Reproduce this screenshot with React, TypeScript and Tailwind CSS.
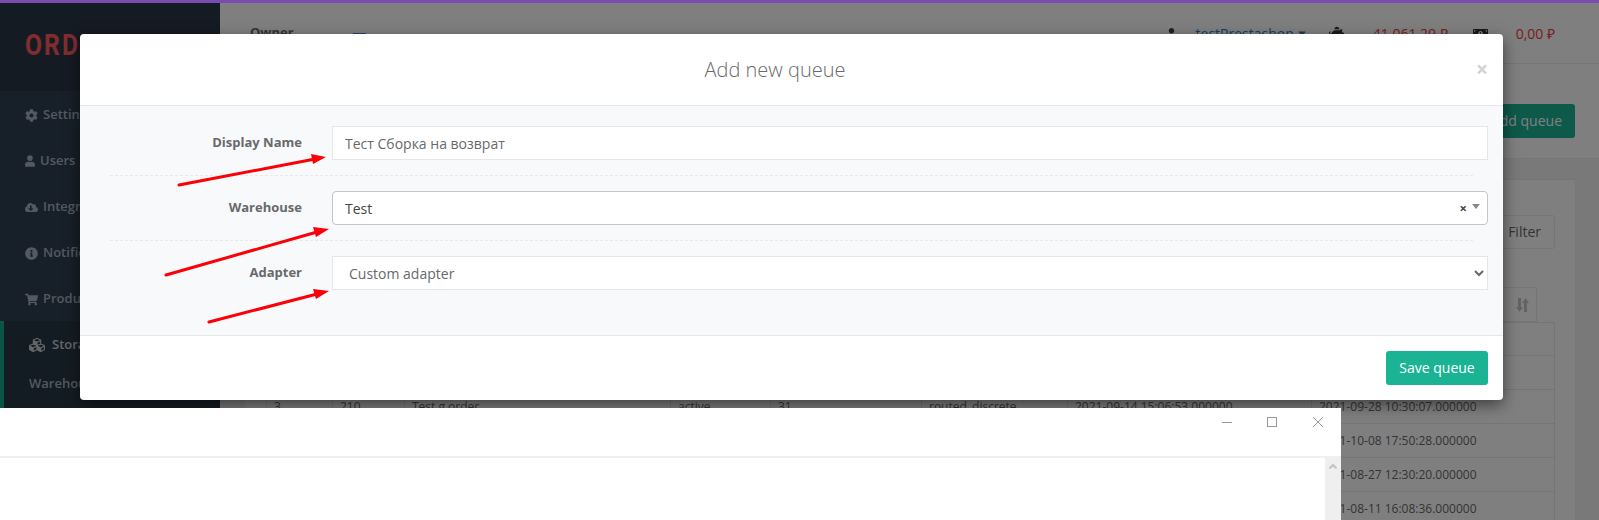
import {
  FaCog,
  FaUser,
  FaCloudDownloadAlt,
  FaInfoCircle,
  FaShoppingCart,
  FaCubes,
  FaPiggyBank,
  FaMoneyBillAlt,
  FaCaretDown,
} from "react-icons/fa";

const NAV = [
  { label: "Settings", icon: FaCog, size: "h-[13px] w-[13px]" },
  { label: "Users", icon: FaUser, size: "h-[12px] w-[10px]" },
  { label: "Integrations", icon: FaCloudDownloadAlt, size: "h-[13px] w-[13px]" },
  { label: "Notifications", icon: FaInfoCircle, size: "h-[13px] w-[13px]" },
  { label: "Products", icon: FaShoppingCart, size: "h-[13px] w-[13px]" },
];

const ROWS = [
  ["1", "208", "Test order", "active", "12", "routed_discrete", "2021-08-10 11:12:40.000000", "2021-08-30 09:41:12.000000"],
  ["3", "210", "Test g order", "active", "31", "routed_discrete", "2021-09-14 15:06:53.000000", "2021-09-28 10:30:07.000000"],
  ["4", "211", "Test order", "active", "14", "routed_discrete", "2021-09-20 12:01:19.000000", "2021-10-08 17:50:28.000000"],
  ["5", "212", "Test order", "active", "8", "routed_discrete", "2021-08-02 10:22:31.000000", "2021-08-27 12:30:20.000000"],
  ["6", "214", "Test order", "active", "5", "routed_discrete", "2021-07-29 09:15:02.000000", "2021-08-11 16:08:36.000000"],
];

function Sidebar() {
  return (
    <aside className="flex w-[220px] shrink-0 flex-col bg-[#2f4050] text-[13px] font-semibold text-[#a7b1c2]">
      <div className="flex h-[88px] items-center bg-[#2a3744] pb-[2px] pl-[25px] font-['Roboto',sans-serif] text-[29px] font-bold tracking-[2.5px] text-[#ff5a60]">
        <span className="origin-left scale-x-[0.85]">ORDERS</span>
      </div>
      {NAV.map(({ label, icon: Icon, size }) => (
        <div key={label} className="flex h-[46px] items-center gap-[5px] pl-[25px] pt-[2px]">
          <Icon className={size} />
          <span>{label}</span>
        </div>
      ))}
      <div className="flex-1 border-l-4 border-[#19aa8d] bg-[#293846]">
        <div className="flex h-[46px] items-center gap-[7px] pl-[25px] pt-[2px] text-white/75">
          <FaCubes className="h-[16px] w-[16px]" />
          <span className="font-semibold">Storage</span>
        </div>
        <div className="pl-[25px] pt-[7px]">Warehouses</div>
      </div>
    </aside>
  );
}

function TopBar() {
  return (
    <div className="flex h-[61px] shrink-0 items-center border-b border-[#e7eaec] bg-white pl-[30px] pr-[44px] text-[14px]">
      <span className="text-[13px] font-bold text-[#676a6c]">Owner</span>
      <span className="ml-[59px] mt-[13px] h-[13px] w-[13px] bg-[#3a8fd8]" />
      <FaUser className="ml-auto h-[11px] w-[11px] text-[#444]" />
      <span className="ml-[19px] flex items-center gap-[2px] text-[#337ab7]">
        testPrestashop
        <FaCaretDown className="h-[12px] w-[12px]" />
      </span>
      <FaPiggyBank className="ml-[21px] h-[15px] w-[15px] text-[#333]" />
      <span className="ml-[29px] text-[#ed3b43]">41 061,29 ₽</span>
      <FaMoneyBillAlt className="ml-[25px] h-[15px] w-[15px] text-[#333]" />
      <span className="ml-[28px] text-[#ed3b43]">0,00 ₽</span>
    </div>
  );
}

function QueuesPanel() {
  return (
    <div className="ml-[25px] mr-[24px] mt-[20px] flex flex-1 flex-col border-t border-[#e7eaec] bg-white pl-[21px] pr-[20px] pt-[35px] text-[12px] text-[#676a6c]">
      <div className="flex justify-end">
        <button className="h-[34px] rounded-[3px] border border-[#e7eaec] px-[13px] pb-[1px] text-[14px]">Filter</button>
      </div>
      <div className="mt-[38px] flex justify-end pr-[18px]">
        <div className="flex h-[35px] w-[40px] items-center justify-end border border-[#e7eaec] pr-[7px] text-[#c6c6c6]">
          <svg width="13" height="14" viewBox="0 0 13 14" fill="currentColor">
            <path d="M2 0H5V9H7L3.5 14L0 9H2Z" />
            <path d="M8 14H11V5H13L9.5 0L6 5H8Z" />
          </svg>
        </div>
      </div>
      <table className="w-full table-fixed border-collapse border border-[#e7eaec]">
        <colgroup>
          <col className="w-[66px]" />
          <col className="w-[72px]" />
          <col className="w-[266px]" />
          <col className="w-[100px]" />
          <col className="w-[151px]" />
          <col className="w-[146px]" />
          <col className="w-[244px]" />
          <col />
        </colgroup>
        <thead>
          <tr className="h-[33px]">
            {["#", "ID", "Name", "Status", "Items", "Adapter", "Created", "Updated"].map((h) => (
              <th key={h} className="border border-[#e7eaec] px-[7px] text-left font-bold">
                {h}
              </th>
            ))}
          </tr>
        </thead>
        <tbody>
          {ROWS.map((row) => (
            <tr key={row[0]} className="h-[34px]">
              {row.map((cell, i) => (
                <td key={i} className="whitespace-nowrap border border-[#e7eaec] px-[7px]">
                  {cell}
                </td>
              ))}
            </tr>
          ))}
        </tbody>
      </table>
    </div>
  );
}

function Field({ label, children }: { label: string; children: React.ReactNode }) {
  return (
    <div className="flex items-center">
      <label className="w-[192px] text-right text-[13px] font-bold text-[#676a6c]">{label}</label>
      <div className="ml-[30px] flex-1">{children}</div>
    </div>
  );
}

function QueueModal() {
  return (
    <div className="absolute left-[80px] top-[34px] w-[1423px] overflow-hidden rounded-[4px] bg-white shadow-[0_5px_15px_rgba(0,0,0,0.5)]">
      <div className="flex h-[71px] items-center pl-[15px] pr-[15px]">
        <h2 className="flex-1 text-center text-[20px] font-light text-[#676a6c]">Add new queue</h2>
        <span className="w-[33px] text-right text-[21px] font-bold leading-none text-[#d2d2d2]">×</span>
      </div>
      <div className="border-y border-[#e5e6e7] bg-[#f8f9fa] pb-[45px] pl-[30px] pr-[15px] pt-[20px]">
        <Field label="Display Name">
          <input
            readOnly
            value="Тест Сборка на возврат"
            className="h-[34px] w-full border border-[#e5e6e7] bg-white px-[12px] text-[14px] text-[#676a6c] outline-none"
          />
        </Field>
        <div className="my-[15px] mr-[15px] border-t border-dashed border-[#e7eaec]" />
        <Field label="Warehouse">
          <div className="flex h-[34px] items-center rounded-[4px] border border-[#c5c5c5] bg-white pl-[12px] pr-[7px] text-[14px] text-[#444]">
            <span className="flex-1">Test</span>
            <span className="mr-[5px] text-[13px] font-bold leading-none text-[#444]">×</span>
            <span className="mb-[4px] h-0 w-0 border-x-[4px] border-t-[5px] border-x-transparent border-t-[#888]" />
          </div>
        </Field>
        <div className="my-[15px] mr-[15px] border-t border-dashed border-[#e7eaec]" />
        <Field label="Adapter">
          <select
            defaultValue="custom"
            className="h-[34px] w-full border border-[#e5e6e7] bg-white px-[12px] text-[14px] text-[#676a6c] outline-none"
          >
            <option value="custom">Custom adapter</option>
          </select>
        </Field>
      </div>
      <div className="flex justify-end px-[15px] py-[15px]">
        <button className="h-[34px] w-[102px] rounded-[3px] bg-[#1ab394] pb-[2px] text-[14px] font-normal text-white">
          Save queue
        </button>
      </div>
    </div>
  );
}

function NoteArrows() {
  // red arrows drawn over the screenshot by hand
  return (
    <svg className="pointer-events-none absolute left-0 top-0" width="1599" height="520">
      <g stroke="#fb0007" strokeWidth="3" strokeLinecap="round">
        <line x1="179" y1="185" x2="315" y2="159" />
        <line x1="166" y1="275" x2="317" y2="232" />
        <line x1="209" y1="322" x2="317" y2="294" />
      </g>
      <g fill="#fb0007">
        <polygon points="326,157 311,154 313,164" />
        <polygon points="329,229 313,227 316,237" />
        <polygon points="329,291 313,289 316,299" />
      </g>
    </svg>
  );
}

function NotesWindow() {
  return (
    <div className="absolute bottom-0 left-0 flex h-[112px] w-[1341px] flex-col bg-white">
      <div className="flex h-[48px] shrink-0 items-start justify-end pr-[13px] pt-[9px] text-[#999]">
        <svg width="106" height="12" viewBox="0 0 106 12" fill="none" stroke="currentColor">
          <path d="M0 5.5H10" />
          <rect x="45.5" y="0.5" width="9" height="9" />
          <path d="M91 0L101 10M101 0L91 10" />
        </svg>
      </div>
      <div className="flex flex-1 border-t-2 border-[#f0f0f0]">
        <div className="flex-1" />
        <div className="flex w-[16px] justify-center bg-[#efefef] pt-[6px]">
          <svg width="8" height="5" viewBox="0 0 8 5" fill="none" stroke="#c2c2c2" strokeWidth="2">
            <path d="M0.5 4.5L4 1L7.5 4.5" />
          </svg>
        </div>
      </div>
    </div>
  );
}

export default function App() {
  return (
    <div className="relative flex h-[520px] w-[1599px] flex-col overflow-hidden font-['Open_Sans',sans-serif]">
      <div className="h-[3px] shrink-0 bg-[#7a4bb0]" />
      <div className="relative flex flex-1 overflow-hidden bg-[#f3f3f4]">
        <Sidebar />
        <main className="flex flex-1 flex-col">
          <TopBar />
          <div className="flex h-[95px] shrink-0 items-start justify-end border-b border-[#e7eaec] bg-white pr-[24px] pt-[40px]">
            <button className="h-[34px] rounded-[3px] bg-[#1ab394] px-[13px] pb-[2px] text-[14px] text-white">Add queue</button>
          </div>
          <QueuesPanel />
        </main>
        <div className="absolute inset-0 bg-black/50" />
      </div>
      <QueueModal />
      <NoteArrows />
      <NotesWindow />
    </div>
  );
}
